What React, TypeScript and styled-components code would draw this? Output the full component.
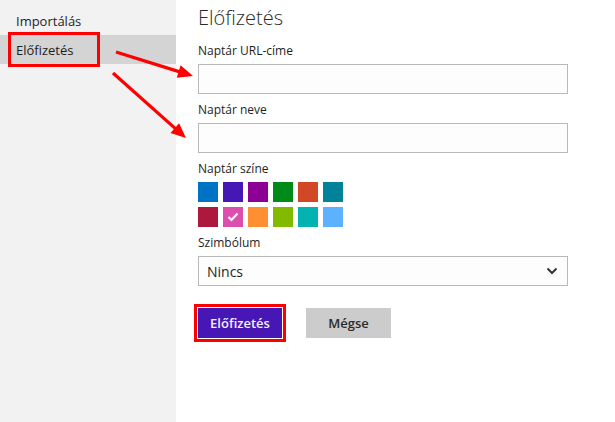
import styled, { createGlobalStyle } from "styled-components";

const GlobalStyle = createGlobalStyle`
  html, body {
    margin: 0;
    padding: 0;
    background: #fff;
  }
  body {
    font-family: "Open Sans", "Noto Sans", sans-serif;
    color: #1e1e1e;
  }
`

const Page = styled.div`
  position: relative;
  display: flex;
  width: 615px;
  height: 422px;
  overflow: hidden;
`

const Sidebar = styled.nav`
  width: 176px;
  flex-shrink: 0;
  background: #f2f2f2;
  padding-top: 6px;
  box-sizing: border-box;
`

const NavItem = styled.div<{$selected?: boolean}>`
  height: 29px;
  display: flex;
  align-items: center;
  padding-left: 11px;
  background: ${({$selected}) => $selected ? "#d4d4d4" : "transparent"};
  font-size: 13px;
  color: #1e1e1e;
`

const Highlight = styled.span<{$marked?: boolean}>`
  display: inline-flex;
  align-items: center;
  height: 29px;
  padding: 0 5px;
  box-sizing: border-box;
  outline: ${({$marked}) => $marked ? "3px solid #ff0000" : "none"};
  width: ${({$marked}) => $marked ? "86px" : "auto"};
`

const Main = styled.main`
  flex: 1;
  padding: 4px 0 0 22px;
  display: flex;
  flex-direction: column;
`

const Title = styled.h1`
  margin: 0 0 11px;
  font-size: 20px;
  font-weight: 300;
  line-height: 28px;
  color: #2b2b2b;
`

const Field = styled.div`
  display: flex;
  flex-direction: column;
  margin-bottom: 8px;
`

const Label = styled.label`
  font-size: 12px;
  line-height: 16px;
  margin-bottom: 5px;
  color: #1e1e1e;
`

const TextInput = styled.input`
  width: 370px;
  height: 30px;
  box-sizing: border-box;
  border: 1px solid #b9b9b9;
  background: #fdfdfd;
  margin: 0;
  padding: 0 8px;
  font: inherit;
`

const Swatches = styled.div`
  display: grid;
  grid-template-columns: repeat(6, 20px);
  grid-auto-rows: 20px;
  gap: 5px;
`

const Swatch = styled.div<{$color: string}>`
  background: ${({$color}) => $color};
  display: grid;
  place-content: center;
`

const Select = styled.div`
  width: 370px;
  height: 30px;
  box-sizing: border-box;
  border: 1px solid #b9b9b9;
  background: #fdfdfd;
  display: flex;
  align-items: center;
  justify-content: space-between;
  padding: 0 9px 0 8px;
  font-size: 14px;
  color: #1e1e1e;
`

const Buttons = styled.div`
  display: flex;
  align-items: center;
  gap: 24px;
  margin-top: 14px;
`

const Button = styled.button<{$primary?: boolean}>`
  height: 30px;
  border: none;
  margin: 0;
  padding: 0;
  font-family: inherit;
  font-size: 13px;
  font-weight: 600;
  color: ${({$primary}) => $primary ? "#f4f0ff" : "#2b2b2b"};
  background: ${({$primary}) => $primary ? "#4617b4" : "#cccccc"};
  box-shadow: ${({$primary}) => $primary ? "0 0 0 1px #fff, 0 0 0 4px #ff0000" : "none"};
  width: ${({$primary}) => $primary ? "84px" : "85px"};
`

const Arrows = styled.svg`
  position: absolute;
  left: 0;
  top: 0;
  pointer-events: none;
`

const colors = [
  "#0072c6", "#4617b4", "#8c0095", "#008a17", "#d24726", "#008299",
  "#ac193d", "#dc4fad", "#ff8f32", "#82ba00", "#03b3b2", "#5db2ff",
]

function Arrow({x1, y1, x2, y2}: {x1: number; y1: number; x2: number; y2: number}) {
  const dx = x2 - x1
  const dy = y2 - y1
  const len = Math.hypot(dx, dy)
  const ux = dx / len
  const uy = dy / len
  const head = 15
  const half = 6.5
  const bx = x2 - ux * head
  const by = y2 - uy * head
  const points = `${x2},${y2} ${bx - uy * half},${by + ux * half} ${bx + uy * half},${by - ux * half}`
  return (
    <g>
      <line x1={x1} y1={y1} x2={bx + ux * 2} y2={by + uy * 2} stroke="#ff0000" strokeWidth={3.2} />
      <polygon points={points} fill="#ff0000" />
    </g>
  )
}

export default function App() {
  return (
    <Page>
      <GlobalStyle />
      <Sidebar>
        <NavItem><Highlight>Importálás</Highlight></NavItem>
        <NavItem $selected><Highlight $marked>Előfizetés</Highlight></NavItem>
      </Sidebar>
      <Main>
        <Title>Előfizetés</Title>
        <Field>
          <Label>Naptár URL-címe</Label>
          <TextInput />
        </Field>
        <Field>
          <Label>Naptár neve</Label>
          <TextInput />
        </Field>
        <Field>
          <Label>Naptár színe</Label>
          <Swatches>
            {colors.map((c, i) => (
              <Swatch key={c} $color={c}>
                {i === 7 && (
                  <svg width="12" height="10" viewBox="0 0 12 10">
                    <path d="M1.5 5 L4.5 8 L10.5 1.5" fill="none" stroke="#fff" strokeWidth="2.2" />
                  </svg>
                )}
              </Swatch>
            ))}
          </Swatches>
        </Field>
        <Field>
          <Label>Szimbólum</Label>
          <Select>
            <span>Nincs</span>
            <svg width="12" height="8" viewBox="0 0 12 8">
              <path d="M1.5 1.5 L6 6 L10.5 1.5" fill="none" stroke="#333" strokeWidth="2" />
            </svg>
          </Select>
        </Field>
        <Buttons>
          <Button $primary>Előfizetés</Button>
          <Button>Mégse</Button>
        </Buttons>
      </Main>
      <Arrows width="615" height="422" viewBox="0 0 615 422">
        <Arrow x1={116} y1={52} x2={193} y2={76} />
        <Arrow x1={113} y1={73} x2={186} y2={138} />
      </Arrows>
    </Page>
  )
}
